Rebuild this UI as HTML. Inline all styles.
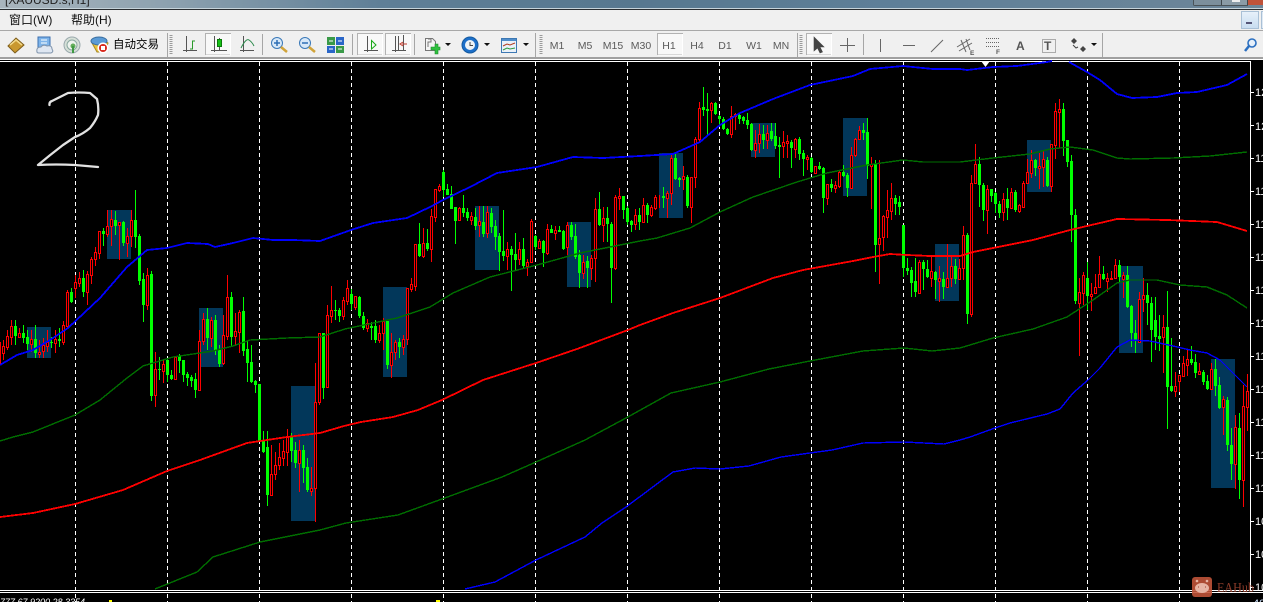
<!DOCTYPE html>
<html><head><meta charset="utf-8"><title>XAUUSD.s,H1</title>
<style>
html,body{margin:0;padding:0;background:#000;width:1263px;height:602px;overflow:hidden}
svg{display:block}
text{font-family:"Liberation Sans","Noto Sans CJK SC",sans-serif}
.m{font-size:12px;fill:#111}
.tf{font-size:10.5px;fill:#5a5a5a;text-anchor:middle}
.ax{font-size:11px;fill:#fff}
.c{shape-rendering:crispEdges;fill:none}
.ln{shape-rendering:crispEdges;fill:none;stroke-width:1.4}
.lt{shape-rendering:crispEdges;fill:none;stroke-width:1.8}
</style></head><body>
<svg width="1263" height="602" viewBox="0 0 1263 602" xmlns="http://www.w3.org/2000/svg">
<defs>
<linearGradient id="tb" x1="0" x2="1" y1="0" y2="0"><stop offset="0" stop-color="#a9b6be"/><stop offset=".14" stop-color="#8ba0ae"/><stop offset=".3" stop-color="#5f7f97"/><stop offset=".5" stop-color="#57788f"/><stop offset=".7" stop-color="#5e7f98"/><stop offset="1" stop-color="#6d8699"/></linearGradient>
<linearGradient id="sb" x1="0" x2="0" y1="0" y2="1"><stop offset="0" stop-color="#e8f1fa"/><stop offset="1" stop-color="#c7dcf0"/></linearGradient>
</defs>
<!-- chrome -->
<rect width="1263" height="8" fill="url(#tb)"/>
<rect y="8" width="1263" height="1" fill="#c5d3da"/>
<rect y="9" width="1263" height="1" fill="#2a2e31"/>
<rect y="10" width="1263" height="47" fill="#f0f0f0"/>
<rect y="30" width="1263" height="1" fill="#a8a8a8"/>
<rect y="57" width="1263" height="2" fill="#a0a0a0"/>
<rect y="59" width="1263" height="1" fill="#fff"/>
<text x="5" y="4" font-size="12" fill="#222">[XAUUSD.s,H1]</text>
<!-- window buttons -->
<path d="M1193.500 0V4.500Q1193.500 5.500 1195 5.500H1248" fill="none" stroke="#4a5358"/>
<rect x="1194" y="0" width="27" height="5" fill="#7c8f9c"/><rect x="1222" y="0" width="26" height="5" fill="#8a9ba6"/>
<path d="M1221.500 0V5M1247.500 0V5" stroke="#3e474c"/><rect x="1232" y="0" width="8" height="2" fill="#eee"/>
<rect x="1248" y="0" width="15" height="5" fill="#c0533a"/>
<rect x="1241.500" y="11.500" width="17" height="17" fill="url(#sb)" stroke="#a9c0d6"/>
<rect x="1246" y="22" width="6" height="2" fill="#557"/>
<rect x="1261.500" y="11.500" width="3" height="17" fill="#dfe9f3" stroke="#a9c0d6"/>
<text class="m" x="9" y="24">窗口(W)</text>
<text class="m" x="71" y="24">帮助(H)</text>
<!-- toolbar separators -->
<path d="M167.500 33V57M262.500 34V55M352.500 34V55M414.500 34V55M535.500 33V57M797.500 33V57M863.500 34V55M1102.500 33V57" stroke="#a6a6a6" class="c"/>
<path d="M171 35V55M541 35V55M801 35V55" stroke="#9a9a9a" stroke-width="3" stroke-dasharray="1 1" class="c"/>
<!-- toggled buttons -->
<g fill="#f8f8f8" stroke="#b2b2b2"><rect x="205.500" y="33.500" width="25" height="21"/><rect x="357.500" y="33.500" width="25" height="21"/><rect x="385.500" y="33.500" width="25" height="21"/><rect x="657.500" y="33.500" width="25" height="21"/><rect x="806.500" y="33.500" width="25" height="21"/></g>
<path d="M230.500 34V55H206M382.500 34V55H358M410.500 34V55H386M682.500 34V55H658M831.500 34V55H807" stroke="#fff" fill="none"/>
<!-- left icons -->
<path d="M8 46L16 38L24 45L15 53Z" fill="#c9982f" stroke="#7d5d1c"/><path d="M10 45L16 40L22 45" fill="none" stroke="#f2d98a" stroke-width="1.500"/>
<rect x="38" y="37" width="12" height="11" fill="#7eb4ea" stroke="#3b6fb0"/><path d="M41 40h6M41 43h6" stroke="#fff"/>
<path d="M37 52q-1-5 4-5q2-3 6-1q5-1 5 3q2 3-1 4H39q-2 0-2-1z" fill="#dfe7f2" stroke="#7f93ab"/>
<circle cx="72" cy="45" r="8" fill="#d6e0d8" stroke="#9aa9ad"/><circle cx="72" cy="45" r="5" fill="#eef3ee" stroke="#8aa8a0"/><circle cx="73" cy="46" r="2.500" fill="#63ad5a"/><path d="M73 46V53" stroke="#3f9a43" stroke-width="2"/>
<path d="M92 43q8-7 16 0l-3 9h-8z" fill="#e9c33d" stroke="#a98a24"/><ellipse cx="99" cy="41" rx="8" ry="4" fill="#5b9bd6" stroke="#3a6e9f"/><circle cx="103" cy="48" r="5.500" fill="#fff"/><circle cx="103" cy="48" r="4" fill="#d82a1e"/><rect x="101" y="46" width="4" height="4" fill="#fff"/>
<text x="113" y="48" font-size="11.500" fill="#000">自动交易</text>
<!-- chart type icons -->
<g fill="none" stroke="#555"><path d="M186.500 36V52M183 50.500H197"/><path d="M190 49h2.500V41H195" stroke="#2a9a2a"/>
<path d="M214.500 36V52M211 50.500H227M219.500 38V50"/><rect x="217.500" y="39.500" width="4" height="7" fill="#17c017" stroke="#0a7a0a"/>
<path d="M243.500 36V52M240 50.500H254"/><path d="M241 48Q246 38 249 40T254 46" stroke="#2c8a4c"/>
<path d="M367.500 36V52M364 50.500H378"/><path d="M371.500 40.500L376 45L371.500 49Z" stroke="#18a818"/>
<path d="M395.500 36V52M392 50.500H406M398.500 36V50M403.500 35V50"/><path d="M402 44H407M403 42L400 44L403 46" stroke="#c0392b"/></g>
<!-- zoom icons -->
<g fill="#d7e8f8" stroke="#3a79b8"><circle cx="277" cy="43" r="5.500"/><circle cx="305" cy="43" r="5.500"/></g>
<path d="M274 43h6M277 40v6" stroke="#2d6fb5" stroke-width="1.500"/><path d="M302 43h6" stroke="#2d6fb5" stroke-width="1.500"/>
<path d="M281 47L287 52M309 47L315 52" stroke="#d1a43a" stroke-width="2.500"/>
<g class="c"><rect x="327" y="37" width="8" height="8" fill="#3a9a48"/><rect x="336" y="37" width="8" height="8" fill="#2a66c8"/><rect x="327" y="46" width="8" height="7" fill="#2a66c8"/><rect x="336" y="46" width="8" height="7" fill="#3a9a48"/><path d="M329 41h4M338 41h4M329 49h4M338 49h4" stroke="#fff"/></g>
<!-- new chart / clock / template -->
<path d="M425.500 38.500h7l3 3v9h-10z" fill="#f4f4f4" stroke="#777"/><path d="M428 39h3v3h-3v5" stroke="#777" fill="none"/>
<path d="M431 47h4v-3h3v3h2v3h-2v4h-3v-4h-4z" fill="#2fc13f" stroke="#1d8a2b" stroke-width=".6"/>
<path d="M445 43h6l-3 3zM484 43h6l-3 3zM523 43h6l-3 3zM1091 43h6l-3 3z" fill="#111"/>
<circle cx="470" cy="45" r="8" fill="#1c6fc9" stroke="#155a9f"/><circle cx="470" cy="45" r="5" fill="#eef3f6"/><path d="M470 42V45.500H473" stroke="#444" fill="none"/>
<rect x="501.500" y="38.500" width="15" height="14" fill="#eaf1f9" stroke="#3d78b3"/><rect x="502" y="39" width="14" height="2" fill="#4f8dcb"/><path d="M503 46l4-2 3 1 5-2" stroke="#b13e22" fill="none"/><path d="M503 50l4-2 3 1 5-1" stroke="#2f9a3f" fill="none"/>
<!-- timeframes -->
<text class="tf" x="557" y="49">M1</text><text class="tf" x="585" y="49">M5</text><text class="tf" x="613" y="49">M15</text><text class="tf" x="641" y="49">M30</text><text class="tf" x="669" y="49">H1</text><text class="tf" x="697" y="49">H4</text><text class="tf" x="725" y="49">D1</text><text class="tf" x="754" y="49">W1</text><text class="tf" x="781" y="49">MN</text>
<!-- drawing tools -->
<path d="M814 37V51L817.500 48L820 53L822.500 52L820 47H824Z" fill="#444" stroke="#444" stroke-width=".6"/>
<path d="M847.500 38V52M840 45.500H855" stroke="#666" fill="none"/>
<g stroke="#666" fill="none"><path d="M880.500 39V52M903 45.500H915M931 52L943 40"/>
<path d="M957 47L970 39M959 51L972 43M961 40L966 52M966 39L970 50"/><path d="M986 38.500H999M986 42.500H999M986 46.500H999" stroke-dasharray="1 1"/>
<path d="M1042.500 39.500H1055.500V52.500H1042.500Z" stroke-dasharray="1 1"/></g>
<text x="970" y="55" font-size="6.500" font-weight="bold" fill="#555">E</text>
<text x="996" y="54" font-size="6.500" font-weight="bold" fill="#555">F</text>
<text x="1016" y="50" font-size="12" font-weight="bold" fill="#555">A</text>
<text x="1044" y="50" font-size="12" font-weight="bold" fill="#555">T</text>
<path d="M1071 41l3-3 3 3-3 3zM1080 49l3-3 3 3-3 3z" fill="#444"/><path d="M1073 45l3 3 2-1" stroke="#444" fill="none"/>
<circle cx="1252" cy="43" r="4" fill="#e6f0fb" stroke="#2b6fc0" stroke-width="1.600"/><path d="M1249 46L1245 51" stroke="#2b6fc0" stroke-width="2.500"/>
<!-- chart -->
<rect y="60" width="1263" height="542" fill="#000"/>
<g class="c" stroke="#fff"><path d="M0 61.500H1251M1250.500 61V590M0 590.500H1263M0 592.500H1263"/>
<path d="M1250 92.500h4M1250 125.500h4M1250 158.500h4M1250 191.500h4M1250 224.500h4M1250 257.500h4M1250 290.500h4M1250 323.500h4M1250 356.500h4M1250 389.500h4M1250 422.500h4M1250 455.500h4M1250 488.500h4M1250 521.500h4M1250 554.500h4M1250 587.500h4"/>
<path stroke-dasharray="4 3" d="M75.500 62V602M167.500 62V602M259.500 62V602M351.500 62V602M443.500 62V602M535.500 62V602M627.500 62V602M719.500 62V602M811.500 62V602M903.500 62V602M995.500 62V602M1087.500 62V602M1179.500 62V602"/></g>
<path d="M981 61H990L985.500 67Z" fill="#fff"/>
<g class="ax"><text x="1255" y="96">1270</text><text x="1255" y="130">1250</text><text x="1255" y="162">1190</text><text x="1255" y="195">1170</text><text x="1255" y="228">1150</text><text x="1255" y="261">1130</text><text x="1255" y="294">1110</text><text x="1255" y="327">1190</text><text x="1255" y="360">1170</text><text x="1255" y="393">1150</text><text x="1255" y="426">1130</text><text x="1255" y="459">1110</text><text x="1255" y="492">1100</text><text x="1255" y="525">1090</text><text x="1255" y="558">1070</text><text x="1255" y="591">1050</text></g>
<!-- boxes -->
<g class="c" style="fill:#02375a"><rect x="27" y="327" width="24" height="31"/><rect x="107" y="210" width="24" height="49"/><rect x="199" y="308" width="24" height="59"/><rect x="291" y="386" width="25" height="135"/><rect x="383" y="287" width="24" height="90"/><rect x="475" y="206" width="24" height="64"/><rect x="567" y="222" width="24" height="65"/><rect x="659" y="153" width="24" height="65"/><rect x="751" y="123" width="24" height="34"/><rect x="843" y="118" width="24" height="78"/><rect x="935" y="244" width="24" height="57"/><rect x="1027" y="140" width="24" height="52"/><rect x="1119" y="266" width="24" height="87"/><rect x="1211" y="359" width="24" height="129"/></g>
<!-- red wicks -->
<path class="c" stroke="#f00" d="M3.500 340V360M7.500 330V350M11.500 320V345M19.500 328V338M31.500 330V352M39.500 340V358M43.500 338V358M47.500 330V352M55.500 330V353M63.500 321V345M67.500 290V328M75.500 275V298M79.500 272V287M87.500 271V305M91.500 257V284M95.500 247V266M99.500 231V259M107.500 210V237M111.500 210V246M119.500 222V260M127.500 228V257M131.500 210V247M147.500 268V310M155.500 352V407M163.500 360V383M175.500 356V380M199.500 330V391M203.500 313V345M211.500 317V347M223.500 315V365M227.500 275V340M235.500 313V346M239.500 310V353M271.500 445V496M275.500 452V480M279.500 443V470M283.500 440V466M287.500 429V466M299.500 440V492M311.500 467V496M315.500 363V522M319.500 333V405M327.500 305V387M331.500 286V323M343.500 297V320M347.500 280V305M355.500 296V310M367.500 319V332M379.500 325V343M383.500 318V350M391.500 333V378M395.500 340V360M403.500 335V355M407.500 288V345M411.500 278V292M415.500 244V291M423.500 228V258M431.500 209V262M435.500 189V222M439.500 184V192M459.500 207V221M471.500 212V225M479.500 206V237M487.500 206V238M507.500 242V270M519.500 242V265M527.500 259V276M531.500 219V263M539.500 239V249M547.500 224V255M555.500 226V240M567.500 222V255M583.500 255V279M591.500 255V280M595.500 198V282M603.500 207V242M615.500 195V270M619.500 188V210M635.500 209V230M643.500 198V223M651.500 205V217M655.500 195V210M659.500 195V208M667.500 191V218M671.500 153V205M683.500 166V190M691.500 177V223M695.500 137V188M699.500 102V143M711.500 102V123M731.500 106V138M735.500 113V130M755.500 130V158M759.500 124V153M767.500 125V149M783.500 131V158M787.500 135V158M795.500 138V158M807.500 155V170M815.500 166V174M827.500 184V205M835.500 181V193M839.500 170V188M851.500 147V188M855.500 138V157M859.500 126V140M871.500 157V209M879.500 160V284M883.500 215V251M887.500 190V238M891.500 183V220M919.500 260V294M931.500 257V287M939.500 266V302M947.500 244V288M951.500 255V287M959.500 259V280M963.500 226V280M971.500 175V317M975.500 144V184M987.500 185V234M1003.500 193V221M1011.500 188V209M1019.500 204V213M1023.500 181V208M1027.500 159V184M1031.500 150V178M1039.500 153V189M1043.500 151V187M1051.500 144V192M1055.500 103V159M1059.500 99V148M1079.500 278V356M1083.500 272V305M1091.500 283V311M1095.500 274V294M1099.500 256V288M1107.500 273V292M1111.500 271V279M1115.500 259V279M1123.500 272V298M1139.500 292V343M1143.500 278V312M1163.500 315V373M1175.500 372V397M1179.500 375V392M1183.500 356V377M1187.500 350V376M1199.500 363V375M1211.500 363V390M1223.500 396V435M1235.500 415V489M1243.500 385V507M1247.500 374V431"/>
<!-- red bodies -->
<path class="c" style="fill:#000" stroke="#f00" d="M-1.500 342.500h2V363.500h-2zM2.500 346.500h2V353.500h-2zM6.500 336.500h2V347.500h-2zM10.500 326.500h2V337.500h-2zM18.500 333.500h2V337.500h-2zM30.500 339.500h2V344.500h-2zM38.500 352.500h2V354.500h-2zM42.500 345.500h2V351.500h-2zM46.500 342.500h2V346.500h-2zM54.500 339.500h2V343.500h-2zM62.500 325.500h2V342.500h-2zM66.500 292.500h2V326.500h-2zM74.500 282.500h2V288.500h-2zM78.500 278.500h2V283.500h-2zM86.500 274.500h2V292.500h-2zM90.500 259.500h2V275.500h-2zM94.500 252.500h2V259.500h-2zM98.500 231.500h2V253.500h-2zM106.500 226.500h2V234.500h-2zM110.500 219.500h2V226.500h-2zM118.500 222.500h2V225.500h-2zM126.500 236.500h2V243.500h-2zM130.500 220.500h2V236.500h-2zM146.500 275.500h2V305.500h-2zM154.500 369.500h2V395.500h-2zM162.500 364.500h2V371.500h-2zM174.500 357.500h2V379.500h-2zM198.500 341.500h2V390.500h-2zM202.500 319.500h2V341.500h-2zM210.500 320.500h2V338.500h-2zM222.500 335.500h2V363.500h-2zM226.500 297.500h2V336.500h-2zM234.500 331.500h2V336.500h-2zM238.500 312.500h2V332.500h-2zM270.500 474.500h2V495.500h-2zM274.500 465.500h2V474.500h-2zM278.500 457.500h2V465.500h-2zM282.500 451.500h2V458.500h-2zM286.500 437.500h2V452.500h-2zM298.500 450.500h2V463.500h-2zM310.500 488.500h2V491.500h-2zM314.500 402.500h2V488.500h-2zM318.500 333.500h2V402.500h-2zM326.500 315.500h2V387.500h-2zM330.500 310.500h2V316.500h-2zM342.500 300.500h2V316.500h-2zM346.500 288.500h2V301.500h-2zM354.500 296.500h2V307.500h-2zM366.500 323.500h2V328.500h-2zM378.500 333.500h2V340.500h-2zM382.500 321.500h2V333.500h-2zM390.500 352.500h2V365.500h-2zM394.500 342.500h2V352.500h-2zM402.500 339.500h2V347.500h-2zM406.500 288.500h2V339.500h-2zM410.500 284.500h2V289.500h-2zM414.500 244.500h2V286.500h-2zM422.500 243.500h2V256.500h-2zM430.500 216.500h2V249.500h-2zM434.500 189.500h2V217.500h-2zM438.500 186.500h2V190.500h-2zM458.500 208.500h2V220.500h-2zM470.500 216.500h2V220.500h-2zM478.500 221.500h2V225.500h-2zM486.500 212.500h2V233.500h-2zM506.500 249.500h2V256.500h-2zM518.500 249.500h2V259.500h-2zM526.500 262.500h2V266.500h-2zM530.500 221.500h2V262.500h-2zM538.500 241.500h2V248.500h-2zM546.500 229.500h2V253.500h-2zM554.500 230.500h2V233.500h-2zM566.500 225.500h2V247.500h-2zM582.500 262.500h2V273.500h-2zM590.500 258.500h2V268.500h-2zM594.500 209.500h2V258.500h-2zM602.500 218.500h2V225.500h-2zM614.500 197.500h2V268.500h-2zM618.500 196.500h2V198.500h-2zM634.500 215.500h2V224.500h-2zM642.500 205.500h2V222.500h-2zM650.500 207.500h2V215.500h-2zM654.500 197.500h2V208.500h-2zM666.500 193.500h2V198.500h-2zM670.500 158.500h2V193.500h-2zM682.500 176.500h2V179.500h-2zM690.500 177.500h2V207.500h-2zM694.500 139.500h2V177.500h-2zM698.500 108.500h2V139.500h-2zM710.500 103.500h2V110.500h-2zM730.500 116.500h2V134.500h-2zM734.500 114.500h2V116.500h-2zM754.500 143.500h2V150.500h-2zM758.500 134.500h2V143.500h-2zM766.500 133.500h2V140.500h-2zM782.500 142.500h2V146.500h-2zM786.500 141.500h2V143.500h-2zM794.500 139.500h2V149.500h-2zM806.500 157.500h2V159.500h-2zM814.500 166.500h2V173.500h-2zM826.500 184.500h2V198.500h-2zM834.500 185.500h2V188.500h-2zM838.500 172.500h2V186.500h-2zM850.500 155.500h2V188.500h-2zM854.500 139.500h2V155.500h-2zM858.500 130.500h2V139.500h-2zM870.500 164.500h2V166.500h-2zM878.500 238.500h2V244.500h-2zM882.500 216.500h2V237.500h-2zM886.500 210.500h2V217.500h-2zM890.500 198.500h2V211.500h-2zM918.500 262.500h2V293.500h-2zM930.500 271.500h2V278.500h-2zM938.500 278.500h2V281.500h-2zM946.500 278.500h2V287.500h-2zM950.500 266.500h2V278.500h-2zM958.500 268.500h2V279.500h-2zM962.500 235.500h2V268.500h-2zM970.500 183.500h2V314.500h-2zM974.500 164.500h2V183.500h-2zM986.500 189.500h2V210.500h-2zM1002.500 199.500h2V212.500h-2zM1010.500 192.500h2V208.500h-2zM1018.500 205.500h2V211.500h-2zM1022.500 183.500h2V207.500h-2zM1026.500 172.500h2V183.500h-2zM1030.500 160.500h2V173.500h-2zM1038.500 166.500h2V168.500h-2zM1042.500 159.500h2V167.500h-2zM1050.500 144.500h2V186.500h-2zM1054.500 111.500h2V145.500h-2zM1058.500 109.500h2V112.500h-2zM1078.500 292.500h2V303.500h-2zM1082.500 275.500h2V293.500h-2zM1090.500 294.500h2V296.500h-2zM1094.500 287.500h2V293.500h-2zM1098.500 274.500h2V287.500h-2zM1106.500 278.500h2V281.500h-2zM1110.500 278.500h2V279.500h-2zM1114.500 265.500h2V278.500h-2zM1122.500 275.500h2V279.500h-2zM1138.500 299.500h2V342.500h-2zM1142.500 295.500h2V299.500h-2zM1162.500 327.500h2V337.500h-2zM1174.500 386.500h2V391.500h-2zM1178.500 375.500h2V381.500h-2zM1182.500 363.500h2V376.500h-2zM1186.500 359.500h2V365.500h-2zM1198.500 371.500h2V374.500h-2zM1210.500 369.500h2V389.500h-2zM1222.500 399.500h2V407.500h-2zM1234.500 427.500h2V464.500h-2zM1242.500 406.500h2V480.500h-2zM1246.500 391.500h2V407.500h-2z"/>
<!-- green wicks -->
<path class="c" stroke="#0f0" d="M15.500 320V345M23.500 325V343M27.500 330V350M35.500 325V358M51.500 337V348M59.500 328V347M71.500 288V303M83.500 270V297M103.500 228V246M115.500 211V235M123.500 221V246M135.500 190V248M139.500 234V285M143.500 273V322M151.500 271V401M159.500 357V380M167.500 358V382M171.500 370V380M179.500 354V373M183.500 360V382M187.500 372V386M191.500 375V387M195.500 373V398M207.500 308V350M215.500 315V355M219.500 345V367M231.500 292V347M243.500 297V356M247.500 340V382M251.500 345V383M255.500 380V393M263.500 431V453M267.500 431V506M291.500 433V462M295.500 442V468M303.500 445V483M307.500 458V492M323.500 333V399M335.500 300V320M339.500 308V322M351.500 289V310M359.500 296V318M363.500 312V330M371.500 322V340M375.500 320V343M387.500 321V369M399.500 338V358M419.500 223V257M427.500 229V251M443.500 170V197M447.500 184V195M451.500 186V209M455.500 207V244M463.500 195V217M467.500 208V221M475.500 208V230M483.500 206V237M491.500 208V233M495.500 220V250M499.500 233V271M503.500 210V261M511.500 246V291M515.500 233V270M523.500 238V269M535.500 235V250M543.500 240V267M551.500 225V233M559.500 226V232M563.500 230V250M571.500 222V240M575.500 224V259M579.500 250V288M587.500 256V288M599.500 192V226M607.500 207V242M611.500 222V303M623.500 196V219M627.500 206V225M631.500 220V232M639.500 208V230M647.500 203V223M663.500 187V208M675.500 153V180M679.500 177V187M687.500 175V208M703.500 87V116M707.500 93V135M715.500 102V115M719.500 115V127M723.500 117V130M727.500 128V135M739.500 114V124M743.500 116V124M747.500 113V129M751.500 123V151M763.500 125V149M771.500 123V141M775.500 123V149M779.500 137V178M791.500 140V168M799.500 137V160M803.500 150V176M811.500 157V173M819.500 162V170M823.500 167V213M831.500 179V192M843.500 165V177M847.500 173V197M863.500 123V140M867.500 118V179M875.500 160V272M895.500 195V215M899.500 196V215M903.500 225V277M907.500 258V275M911.500 267V297M915.500 258V297M923.500 260V290M927.500 260V278M935.500 271V299M943.500 272V299M955.500 259V284M967.500 233V324M979.500 157V207M983.500 183V221M991.500 189V202M995.500 192V213M999.500 201V218M1007.500 188V220M1015.500 190V212M1035.500 159V176M1047.500 157V187M1063.500 103V156M1067.500 140V167M1071.500 155V242M1075.500 209V304M1087.500 262V310M1103.500 266V280M1119.500 260V283M1127.500 266V308M1131.500 305V347M1135.500 320V353M1147.500 283V325M1151.500 297V362M1155.500 297V350M1159.500 315V351M1167.500 291V429M1171.500 338V392M1191.500 346V365M1195.500 354V378M1203.500 370V385M1207.500 375V390M1215.500 359V396M1219.500 377V409M1227.500 397V451M1231.500 428V480M1239.500 413V499"/>
<!-- green bodies -->
<path class="c" stroke="#0f0" stroke-width="3" d="M15.500 326V336M23.500 333V338M27.500 337V344M35.500 339V353M51.500 342V343M59.500 339V341M71.500 292V302M83.500 278V292M103.500 231V234M115.500 220V226M123.500 222V243M135.500 220V237M139.500 236V281M143.500 279V305M151.500 274V396M159.500 369V370M167.500 360V375M171.500 375V379M179.500 356V361M183.500 360V375M187.500 374V378M191.500 377V381M195.500 379V390M207.500 319V338M215.500 320V350M219.500 349V364M231.500 297V337M243.500 311V351M247.500 349V363M251.500 362V382M255.500 381V385M259.500 384V441M263.500 440V452M267.500 447V495M291.500 437V451M295.500 450V463M303.500 450V468M307.500 467V490M323.500 333V388M335.500 310V311M339.500 310V316M351.500 294V304M359.500 297V316M363.500 316V328M371.500 326V328M375.500 326V340M387.500 321V365M399.500 342V347M419.500 244V256M427.500 243V249M443.500 172V190M447.500 189V195M451.500 194V209M455.500 207V221M463.500 208V213M467.500 212V218M475.500 217V226M483.500 222V234M491.500 213V227M495.500 226V237M499.500 236V252M503.500 251V256M511.500 249V255M515.500 254V260M523.500 249V266M535.500 236V247M543.500 241V253M551.500 229V233M559.500 230V232M563.500 231V249M571.500 225V237M575.500 236V257M579.500 255V273M587.500 261V268M599.500 209V225M607.500 218V224M611.500 224V268M623.500 196V210M627.500 208V222M631.500 221V225M639.500 215V222M647.500 205V215M663.500 196V198M675.500 158V179M679.500 178V180M687.500 177V206M703.500 107V110M707.500 109V111M715.500 103V114M719.500 116V119M723.500 119V129M727.500 129V134M739.500 115V119M743.500 117V121M747.500 120V125M751.500 124V150M763.500 134V140M771.500 131V139M775.500 136V146M779.500 145V147M791.500 142V148M799.500 139V154M803.500 153V159M811.500 158V172M819.500 166V169M823.500 168V198M831.500 184V188M843.500 172V176M847.500 175V188M863.500 130V133M867.500 132V166M875.500 164V245M895.500 198V204M899.500 202V207M903.500 225V268M907.500 268V271M911.500 270V283M915.500 281V292M923.500 262V269M927.500 269V277M935.500 272V280M943.500 279V287M955.500 266V279M967.500 235V314M979.500 164V185M983.500 185V210M991.500 189V196M995.500 193V204M999.500 204V213M1007.500 199V208M1015.500 192V210M1035.500 160V168M1047.500 160V186M1063.500 109V141M1067.500 140V162M1071.500 161V215M1075.500 215V301M1087.500 278V296M1103.500 274V279M1119.500 265V277M1127.500 275V307M1131.500 306V333M1135.500 333V341M1147.500 295V303M1151.500 303V330M1155.500 320V337M1159.500 336V339M1167.500 327V387M1171.500 386V391M1191.500 359V363M1195.500 362V373M1203.500 372V382M1207.500 381V389M1215.500 369V386M1219.500 385V408M1227.500 400V445M1231.500 445V464M1239.500 428V480"/>
<!-- indicator lines -->
<polyline class="lt" stroke="#0000ff" points="0,365 17,355 33,350 50,340 68,328 100,298 127,267 147,250 167,248 187,243 208,244 215,247 233,243 253,238 273,240 293,240 320,241 351,230 373,223 407,218 430,207 443,200 470,187 497,173 537,167 573,157 603,158 640,156 673,154 700,142 720,125 740,113 773,99 810,85 853,76 870,69 903,66 933,69 960,69 967,70 993,67 1017,66 1047,62 1052,61"/>
<polyline class="lt" stroke="#0000ff" points="1069,62 1087,72 1100,80 1117,94 1132,98 1157,97 1177,93 1197,92 1227,85 1247,74"/>
<polyline class="ln" stroke="#006e00" points="0,441 13,437 33,432 75,415 100,400 127,378 143,366 173,357 213,351 233,346 250,340 287,338 320,337 345,329 397,318 430,307 453,293 490,277 537,265 580,253 640,241 657,238 690,228 720,212 753,197 797,182 827,173 867,165 903,160 923,162 960,162 993,158 1030,154 1050,149 1070,147 1093,150 1117,158 1130,159 1173,158 1210,156 1247,152"/>
<polyline class="lt" stroke="#f00" points="0,517 33,513 75,504 123,490 167,471 200,460 247,443 287,437 320,433 344,426 361,422 393,417 418,410 442,400 483,380 536,363 577,349 628,330 640,325 673,313 720,298 773,278 803,270 853,261 873,257 890,254 907,255 930,256 960,256 973,252 1033,240 1070,230 1117,219 1167,220 1217,222 1247,231"/>
<polyline class="ln" stroke="#006e00" points="155,589 197,572 213,557 260,542 320,530 346,523 398,515 442,499 502,477 536,462 585,440 626,418 671,393 720,382 769,369 810,361 863,351 904,348 932,351 960,348 993,338 1033,329 1067,317 1093,300 1117,283 1130,280 1157,280 1180,285 1207,287 1227,295 1247,308"/>
<polyline class="ln" stroke="#0000ff" points="465,589 495,582 536,560 585,537 602,523 626,507 673,472 695,468 720,469 749,466 781,457 810,453 832,450 863,443 904,442 944,444 960,440 970,437 995,428 1010,423 1047,414 1060,409 1073,393 1088,380 1100,368 1117,347 1130,340 1150,341 1173,346 1190,350 1207,353 1220,360 1237,377 1247,387"/>
<!-- handwritten 2 -->
<path d="M49.500 105Q49 102 52 101Q60 97 68 93Q79 92 90 93L97 99Q99 107 98 115Q95 122 90 128Q83 134 75 137Q69 141 63 145Q50 155 38 165Q56 164 75 165Q87 166 98 167" fill="none" stroke="#e2e2e2" stroke-width="2.300" stroke-linejoin="round" stroke-linecap="round"/>
<!-- status -->
<text x="0" y="605" font-size="9.500" font-style="italic" fill="#fff" textLength="85" lengthAdjust="spacingAndGlyphs">777 67 9200 28 3354</text>
<rect x="109" y="600" width="3" height="2" fill="#ff0"/><rect x="436" y="600" width="4" height="2" fill="#ff0"/>
<text x="1253" y="607" font-size="11" fill="#cfe4ff">40</text>
<!-- watermark -->
<rect x="1192" y="577" width="20" height="20" rx="3" fill="#c4553a" opacity=".88"/>
<ellipse cx="1202" cy="588" rx="7" ry="5" fill="#e6b4a4"/><circle cx="1197" cy="581" r="1.300" fill="#e6b4a4"/><circle cx="1207" cy="581" r="1.300" fill="#e6b4a4"/><path d="M1198 587h1M1205 587h1" stroke="#a04030"/>
<text x="1217" y="592" font-size="14" style="font-family:'Liberation Serif',serif" fill="#8a3a28" textLength="37" lengthAdjust="spacingAndGlyphs">EAHub</text>
</svg>
</body></html>
